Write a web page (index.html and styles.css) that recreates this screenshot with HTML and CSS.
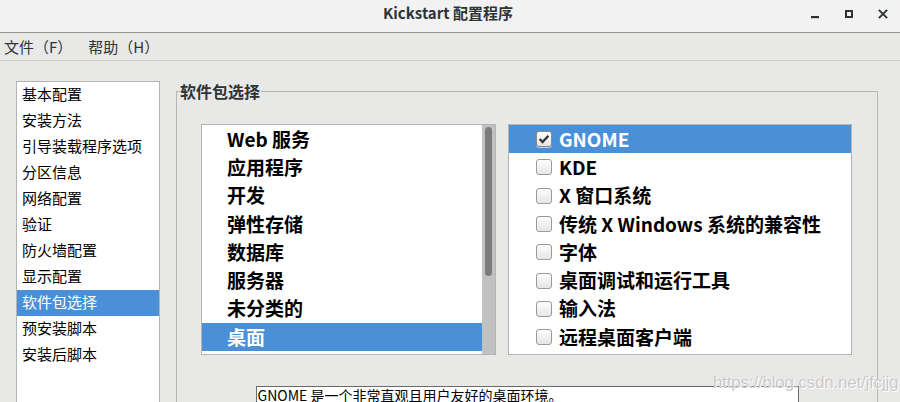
FILE: index.html
```html
<!DOCTYPE html>
<html lang="zh-CN">
<head>
<meta charset="utf-8">
<title>Kickstart 配置程序</title>
<link rel="stylesheet" href="styles.css">
</head>
<body>
<div class="window">
  <header class="titlebar">
    <div class="title-spacer"></div>
    <div class="title">Kickstart 配置程序</div>
    <div class="controls">
      <span class="ctl"><svg width="16" height="16" viewBox="0 0 16 16"><rect x="4" y="10" width="8" height="2.2" fill="#2e3436"/></svg></span>
      <span class="ctl"><svg width="16" height="16" viewBox="0 0 16 16"><rect x="5" y="5" width="6" height="6" fill="none" stroke="#2e3436" stroke-width="2"/></svg></span>
      <span class="ctl"><svg width="16" height="16" viewBox="0 0 16 16"><path d="M4.6 4.6 L11.4 11.4 M11.4 4.6 L4.6 11.4" stroke="#2e3436" stroke-width="2" stroke-linecap="square"/></svg></span>
    </div>
  </header>
  <nav class="menubar">
    <span class="menu">文件（F）</span>
    <span class="menu">帮助（H）</span>
  </nav>
  <main class="content">
    <ul class="sidebar">
      <li>基本配置</li>
      <li>安装方法</li>
      <li>引导装载程序选项</li>
      <li>分区信息</li>
      <li>网络配置</li>
      <li>验证</li>
      <li>防火墙配置</li>
      <li>显示配置</li>
      <li class="selected">软件包选择</li>
      <li>预安装脚本</li>
      <li>安装后脚本</li>
    </ul>
    <fieldset class="frame">
      <legend class="frame-label">软件包选择</legend>
      <div class="lists">
        <div class="list groups">
          <ul class="group-items">
            <li>Web 服务</li>
            <li>应用程序</li>
            <li>开发</li>
            <li>弹性存储</li>
            <li>数据库</li>
            <li>服务器</li>
            <li>未分类的</li>
            <li class="selected">桌面</li>
          </ul>
          <div class="scrollbar"><div class="thumb"></div></div>
        </div>
        <ul class="list packages">
          <li class="selected"><span class="check checked"><svg width="16" height="16" viewBox="0 0 16 16"><path d="M3.6 8 L6.6 11 L12.4 4.8" fill="none" stroke="#2e3436" stroke-width="2.3"/></svg></span>GNOME</li>
          <li><span class="check"></span>KDE</li>
          <li><span class="check"></span>X 窗口系统</li>
          <li><span class="check"></span>传统 X Windows 系统的兼容性</li>
          <li><span class="check"></span>字体</li>
          <li><span class="check"></span>桌面调试和运行工具</li>
          <li><span class="check"></span>输入法</li>
          <li><span class="check"></span>远程桌面客户端</li>
        </ul>
      </div>
      <div class="description">GNOME 是一个非常直观且用户友好的桌面环境。</div>
    </fieldset>
  </main>
  <div class="watermark">https://blog.csdn.net/jfcjjg</div>
</div>
</body>
</html>
```

FILE: styles.css
```css
* { box-sizing: border-box; }

html, body {
  margin: 0;
  padding: 0;
}

body {
  width: 900px;
  height: 402px;
  overflow: hidden;
  background: #e8e8e7;
  font-family: "Noto Sans CJK SC", "Noto Sans", sans-serif;
  color: #000;
}

.window {
  position: relative;
  width: 900px;
  height: 402px;
  overflow: hidden;
}

ul { list-style: none; margin: 0; padding: 0; }

/* Title bar */
.titlebar {
  height: 33px;
  background: #f2f2f2;
  border-bottom: 1px solid #959595;
  display: grid;
  grid-template-columns: 1fr auto 1fr;
  align-items: start;
}

.title {
  padding-top: 3px;
  line-height: 20px;
  font-size: 15px;
  font-weight: bold;
  color: #2e3436;
  margin-left: -4px;
}

.controls {
  display: flex;
  justify-content: flex-end;
  padding-top: 6px;
}

.ctl {
  width: 34px;
  height: 16px;
  display: flex;
  justify-content: center;
}

/* Menu bar */
.menubar {
  height: 28px;
  border-bottom: 1px solid #cfcfcf;
  display: flex;
  align-items: center;
  padding-left: 4px;
  gap: 16px;
  font-size: 15px;
  color: #2e3436;
}

.menu { line-height: 20px; }

/* Content */
.content {
  display: flex;
  align-items: flex-start;
  padding: 20px 0 0 16px;
  gap: 16px;
}

.sidebar {
  width: 144px;
  height: 340px;
  background: #fff;
  border: 1px solid #b4b4b4;
  font-size: 15px;
}

.sidebar li {
  height: 26px;
  line-height: 24px;
  padding-left: 5px;
  white-space: nowrap;
}

.sidebar li.selected {
  background: #4a90d9;
  color: #fff;
}

/* Frame */
.frame {
  width: 702px;
  margin: 0;
  padding: 0;
  border: 1px solid #b6b6b6;
  min-width: 0;
}

.frame-label {
  margin-left: 3px;
  padding: 0 1px 0 0;
  font-size: 16px;
  font-weight: bold;
  line-height: 20px;
  color: #2e3436;
}

.lists {
  display: flex;
  gap: 12px;
  padding: 23px 0 0 24px;
}

.list {
  height: 231px;
  background: #fff;
  border: 1px solid #b4b4b4;
}

.groups {
  width: 295px;
  display: flex;
}

.group-items {
  flex: 1;
  font-size: 19px;
  font-weight: bold;
}

.group-items li,
.packages li {
  height: 28.3px;
  display: flex;
  align-items: center;
  white-space: nowrap;
  padding-bottom: 2px;
}

.group-items li { padding-left: 25px; }

.group-items li.selected,
.packages li.selected {
  background: #4a90d9;
  color: #fff;
}

.scrollbar {
  width: 13px;
  background: #c1c1c1;
  padding: 2px 0 0 3px;
}

.thumb {
  width: 7px;
  height: 149px;
  background: #7c7c7c;
  border-radius: 4px;
}

.packages {
  width: 344px;
  font-size: 19px;
  font-weight: bold;
}

.packages li { padding-left: 27px; }

.check {
  width: 16px;
  height: 16px;
  margin-right: 7px;
  margin-top: 2px;
  border: 1px solid #9a9a9a;
  border-radius: 3px;
  background: linear-gradient(#fdfdfd, #e6e6e6);
  box-shadow: 0 1px 0 rgba(255, 255, 255, 0.6);
  display: flex;
  align-items: center;
  justify-content: center;
  flex: none;
}

.check svg { flex: none; margin: -1px; }

.check.checked {
  border-color: #8a8a8a;
  background: linear-gradient(#ffffff, #e6e6e6);
}

/* Description */
.description {
  width: 543px;
  height: 60px;
  margin: 31px auto 0;
  background: #fff;
  border: 1px solid #6a6a6a;
  font-size: 14px;
  line-height: 16px;
  padding: 0 0 0 1px;
  color: #000;
}

/* Watermark overlay */
.watermark {
  position: absolute;
  left: 713px;
  top: 372px;
  font-family: "Liberation Sans", Arial, sans-serif;
  font-size: 17px;
  line-height: 22px;
  color: #c8c8c8;
  text-shadow: 0 0 1px #fff, 1px 1px 0 #fff;
  letter-spacing: -0.2px;
}
```
